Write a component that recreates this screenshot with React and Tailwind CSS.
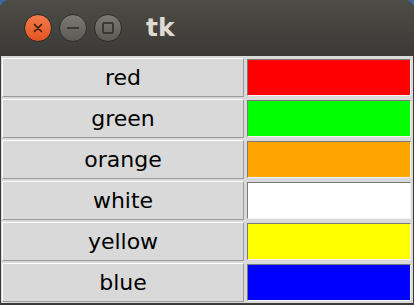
// tk window: title bar + 6 label/colour rows

const ROWS = [
  { name: "red", color: "bg-[#ff0000]" },
  { name: "green", color: "bg-[#00ff00]" },
  { name: "orange", color: "bg-[#ffa500]" },
  { name: "white", color: "bg-[#ffffff]" },
  { name: "yellow", color: "bg-[#ffff00]" },
  { name: "blue", color: "bg-[#0000ff]" },
]

function TitleButton({ kind }) {
  if (kind === "close") {
    return (
      <div className="flex h-[28px] w-[28px] items-center justify-center rounded-full border border-[#2b2a27] bg-gradient-to-b from-[#f47a4a] to-[#e2531f]">
        <svg width="12" height="12" viewBox="0 0 12 12">
          <path d="M2.5 2.5 L9.5 9.5 M9.5 2.5 L2.5 9.5" stroke="#3a1a0e" strokeWidth="1.6" strokeLinecap="round" />
        </svg>
      </div>
    )
  }
  return (
    <div className="flex h-[28px] w-[28px] items-center justify-center rounded-full border border-[#2f2e2b] bg-gradient-to-b from-[#7a7974] to-[#5b5a55]">
      {kind === "min" ? (
        <div className="h-[2px] w-[12px] bg-[#3a3935]" />
      ) : (
        <div className="h-[12px] w-[12px] rounded-[2px] border-2 border-[#3a3935]" />
      )}
    </div>
  )
}

export default function App() {
  return (
    <div className="h-[305px] w-[414px] bg-[#3d6aa0]">
      <div className="flex h-full flex-col overflow-hidden rounded-t-[9px] bg-[#3c3b37]">
        <div className="flex h-[56px] items-center bg-gradient-to-b from-[#4d4c47] to-[#3b3a36] pl-[24px]">
          <div className="flex gap-[7px]">
            <TitleButton kind="close" />
            <TitleButton kind="min" />
            <TitleButton kind="max" />
          </div>
          <span className="ml-[24px] font-['DejaVu_Sans',sans-serif] text-[25px] font-bold text-[#dfdbd2]">
            tk
          </span>
        </div>
        <div className="mx-[1px] mb-[2px] flex flex-1 flex-col bg-[#d9d9d9] pt-[1px]">
          {ROWS.map((row) => (
            <div key={row.name} className="flex h-[41px] gap-[3px] py-[1px] pl-[1px] pr-[2px]">
              <div className="flex w-[242px] items-center justify-center border border-t-white border-l-white border-b-[#9a9a9a] border-r-[#9a9a9a] font-['DejaVu_Sans',sans-serif] text-[22px] text-black">
                {row.name}
              </div>
              <div className={`flex-1 border border-t-[#7a7a7a] border-l-[#7a7a7a] border-b-[#f4f4f4] border-r-[#f4f4f4] my-[1px] ${row.color}`} />
            </div>
          ))}
        </div>
      </div>
    </div>
  )
}
